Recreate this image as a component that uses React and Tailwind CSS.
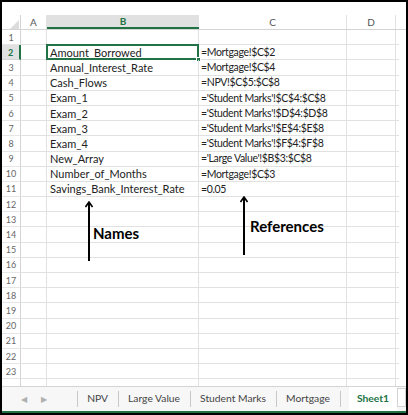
import React from "react";

const rows = [
  [],
  ["Amount_Borrowed", "=Mortgage!$C$2"],
  ["Annual_Interest_Rate", "=Mortgage!$C$4"],
  ["Cash_Flows", "=NPV!$C$5:$C$8"],
  ["Exam_1", "='Student Marks'!$C$4:$C$8"],
  ["Exam_2", "='Student Marks'!$D$4:$D$8"],
  ["Exam_3", "='Student Marks'!$E$4:$E$8"],
  ["Exam_4", "='Student Marks'!$F$4:$F$8"],
  ["New_Array", "='Large Value'!$B$3:$C$8"],
  ["Number_of_Months", "=Mortgage!$C$3"],
  ["Savings_Bank_Interest_Rate", "=0.05"],
];

const tabs = ["NPV", "Large Value", "Student Marks", "Mortgage"];

const font = { fontFamily: "Lato, 'Open Sans', sans-serif" };

export default function App() {
  const allRows = Array.from({ length: 24 }, (_, i) => rows[i] || []);

  return (
    <div
      className="w-[408px] h-[415px] border-2 border-black bg-white flex flex-col overflow-hidden"
      style={font}
    >
      <div className="h-[13px] shrink-0" />

      {/* grid */}
      <div className="relative flex-1 overflow-hidden">
        {/* column headers */}
        <div className="flex h-[15px] border-b border-[#d4d4d4] text-[10px] text-[#555]">
          <div className="w-[19px] border-r border-[#d4d4d4] relative">
            <svg className="absolute left-[8px] top-[5px]" width="9" height="9" viewBox="0 0 9 9">
              <polygon points="9,0 9,9 0,9" fill="#dcdcdc" />
            </svg>
          </div>
          <div className="w-[26px] border-r border-[#e1e1e1] flex items-center justify-center">A</div>
          <div className="w-[152px] bg-[#e1e1e1] border-b-2 border-[#217346] flex items-center justify-center font-bold text-[#217346]">
            B
          </div>
          <div className="w-[148px] border-r border-[#e1e1e1] flex items-center justify-center">C</div>
          <div className="w-[49px] border-r border-[#e1e1e1] flex items-center justify-center">D</div>
          <div className="w-[3px]" />
        </div>

        {allRows.map((r, i) => {
          const n = i + 1;
          const active = n === 2;
          return (
            <div key={n} className="flex h-[15.2px] text-[11px] text-[#222] leading-none">
              <div
                className={
                  active
                    ? "w-[19px] bg-[#e1e1e1] border-r-2 border-[#217346] border-b border-b-[#d4d4d4] flex items-center justify-center text-[9px] font-bold text-[#217346]"
                    : "w-[19px] border-r border-[#d4d4d4] border-b border-b-[#e6e6e6] flex items-center justify-center text-[9px] text-[#666]"
                }
              >
                {n < 24 ? n : ""}
              </div>
              <div className="w-[26px] border-r border-b border-[#e1e1e1]" />
              <div className="w-[152px] border-r border-b border-[#e1e1e1] flex items-center pl-[3px] relative whitespace-nowrap">
                {r[0]}
                {active && (
                  <div className="absolute -left-px -top-px w-[153px] h-[16px] border-2 border-[#217346]">
                    <div className="absolute -right-[4px] -bottom-[4px] w-[5px] h-[5px] bg-[#217346] border border-white" />
                  </div>
                )}
              </div>
              <div className="w-[148px] border-r border-b border-[#e1e1e1] flex items-center pl-[2px] whitespace-nowrap text-[10.5px] tracking-[-0.35px]">
                {r[1]}
              </div>
              <div className="w-[49px] border-r border-b border-[#e1e1e1]" />
              <div className="w-[3px] border-b border-[#e1e1e1]" />
            </div>
          );
        })}

        {/* annotations */}
        <div className="absolute left-[83px] top-[186px]">
          <svg width="8" height="60" viewBox="0 0 8 60">
            <path d="M4 1 L4 60" stroke="#000" strokeWidth="2" />
            <path d="M0.5 6 L4 1 L7.5 6" stroke="#000" strokeWidth="1.6" fill="none" />
          </svg>
        </div>
        <div className="absolute left-[91px] top-[207px] text-[15px] font-bold text-black">Names</div>

        <div className="absolute left-[237.5px] top-[181px]">
          <svg width="8" height="59" viewBox="0 0 8 59">
            <path d="M4 1 L4 59" stroke="#000" strokeWidth="2" />
            <path d="M0.5 6 L4 1 L7.5 6" stroke="#000" strokeWidth="1.6" fill="none" />
          </svg>
        </div>
        <div className="absolute left-[248px] top-[200px] text-[15px] font-bold text-black">References</div>
      </div>

      {/* sheet tabs */}
      <div className="h-[27px] shrink-0 bg-[#f7f7f7] border-t border-[#d4d4d4] border-b-2 border-b-[#217346] flex items-stretch text-[10.3px] text-[#444] whitespace-nowrap">
        <div className="w-[76px] flex items-center gap-[14px] pl-[19px] text-[8px] text-[#b0b0b0]">
          <span>◀</span>
          <span>▶</span>
        </div>
        {tabs.map((t) => (
          <div key={t} className="flex items-center">
            <div className="w-px h-[16px] bg-[#c8c8c8]" />
            <div className="pl-[9px] pr-[10px]">{t}</div>
          </div>
        ))}
        <div className="w-px h-[16px] bg-[#c8c8c8] self-center" />
        <div className="ml-[8px] w-[49px] bg-white border-b-2 border-[#217346] flex items-center justify-center font-bold text-[#217346] -mb-[2px]">
          Sheet1
        </div>
        <div className="w-[9px] h-[19px] mt-px border border-[#d4d4d4] bg-white" />
      </div>
    </div>
  );
}
